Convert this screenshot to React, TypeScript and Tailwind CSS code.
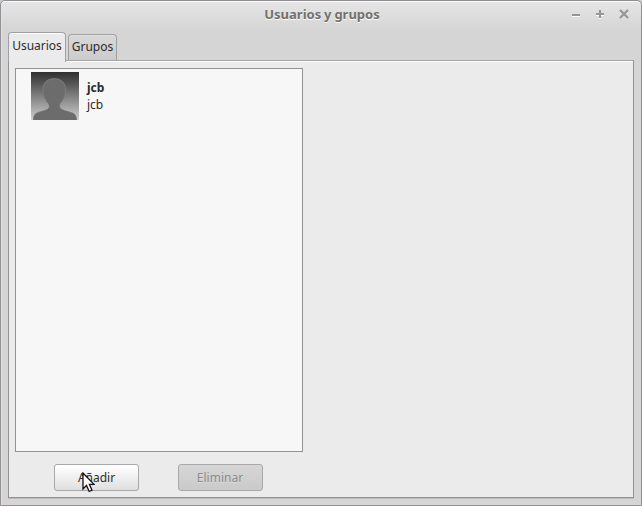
const BUTTON = 'flex h-[27px] w-[85px] items-center justify-center rounded-[3px] border text-[12px]';

function Avatar() {
  return (
    <svg className="block size-12" viewBox="0 0 48 48" aria-hidden="true">
      <defs>
        <linearGradient id="shade" x1="0" y1="0" x2="0" y2="1">
          <stop offset="0" stopColor="#2f2f2f" />
          <stop offset="0.45" stopColor="#777" />
          <stop offset="1" stopColor="#cfcfcf" />
        </linearGradient>
        <linearGradient id="rim" x1="0" y1="0" x2="0" y2="1">
          <stop offset="0" stopColor="#929292" />
          <stop offset="0.6" stopColor="#6d6d6d" />
        </linearGradient>
      </defs>
      <rect width="48" height="48" fill="url(#shade)" />
      <path
        d="M2.5 48C2.5 43 4 41.3 8 40.2C12 39 16 38.4 18 36C18.8 34.8 18.4 33 17.5 31.5C14.5 28.5 12 23 12 18C12 10.5 16.5 6.7 23 6.7C30 6.7 34.5 10.5 34.5 18C34.5 23 32 28.5 29 31.5C28.2 33 28 34.8 29 36C31 38.4 35 39 39 40.2C43.5 41.5 45.5 43 45.5 48Z"
        fill="#6c6c6c"
        stroke="url(#rim)"
        strokeWidth="0.7"
      />
    </svg>
  );
}

function WindowControls() {
  return (
    <svg className="absolute top-[4px] right-[8px] h-[18px] w-[64px]" viewBox="0 0 64 18" fill="none" aria-hidden="true">
      <g stroke="#fff" strokeWidth="2" transform="translate(0 1)">
        <path d="M3 10H11M27 9H35M31 5V13" />
        <path d="M51.5 5L58.5 12M58.5 5L51.5 12" />
      </g>
      <g stroke="#969696" strokeWidth="2">
        <path d="M3 10H11M27 9H35M31 5V13" />
        <path d="M51 5L59 13M59 5L51 13" strokeWidth="2.4" />
      </g>
    </svg>
  );
}

export default function App() {
  return (
    <div className="h-[506px] w-[642px] bg-[#c9c9c9] font-['Noto_Sans',sans-serif] text-[12px] text-[#2b2b2b]">
      <div className="flex h-full w-full flex-col rounded-t-[5px] border border-[#929094] bg-[#d5d5d5] bg-[linear-gradient(#e6e6e6,#d5d5d5_28px)] shadow-[inset_0_1px_#fafafa,inset_1px_0_#e2e2e2]">
        <header className="relative flex h-[31px] shrink-0 items-center justify-center pb-[4px] pl-[2px]">
          <h1 className="text-[13px] leading-[17px] font-bold text-[#707070] [text-shadow:0_1px_#fff] [word-spacing:-0.5px]">Usuarios y grupos</h1>
          <WindowControls />
        </header>
        <nav className="z-10 ml-[7px] flex h-[29px] shrink-0 items-start gap-[2px]">
          <button className="h-[30px] w-[58px] rounded-t-[4px] border border-b-0 border-[#a0a0a0] bg-[#ebebeb] pb-[4px] shadow-[inset_0_1px_#fff]">Usuarios</button>
          <button className="mt-[2px] h-[26px] w-[49px] rounded-t-[4px] border border-b-0 border-[#a0a0a0] bg-linear-to-b from-[#d8d8d8] to-[#cccccc] pb-[2px] shadow-[inset_0_1px_#e2e2e2]">Grupos</button>
        </nav>
        <main className="mx-[7px] mt-[-1px] mb-[7px] flex-1 border border-[#929292] border-t-[#a6a6a6] bg-[#ebebeb] px-[6px] pt-[7px] shadow-[inset_0_1px_#fff,0_1px_#bdbdbd]">
          <section className="h-[384px] w-[288px] border border-[#929292] bg-[#f7f7f7] pt-[3px] pl-[15px]">
            <div className="flex gap-2">
              <Avatar />
              <div className="pt-[7px] leading-[17px]">
                <div className="font-bold">jcb</div>
                <div>jcb</div>
              </div>
            </div>
          </section>
          <div className="mt-3 ml-[39px] flex gap-[39px]">
            <div className="relative">
              <button className={`${BUTTON} border-[#a8a8a8] bg-linear-to-b from-white to-[#dfdfdf]`}>Añadir</button>
              <svg className="absolute top-[8px] left-[28px] h-[21px] w-[13px]" viewBox="0 0 13 21" aria-hidden="true">
                <path d="M1 1V17L4.5 13.5L7.2 19.5L10 18.2L7.4 12.3H12Z" fill="#fff" stroke="#111" strokeWidth="1.3" />
              </svg>
            </div>
            <button className={`${BUTTON} border-[#a8a8a8] bg-linear-to-b from-[#d6d6d6] to-[#cacaca] pr-px text-[#8c8c8c] [text-shadow:0_1px_#dedede]`} disabled>Eliminar</button>
          </div>
        </main>
      </div>
    </div>
  );
}
